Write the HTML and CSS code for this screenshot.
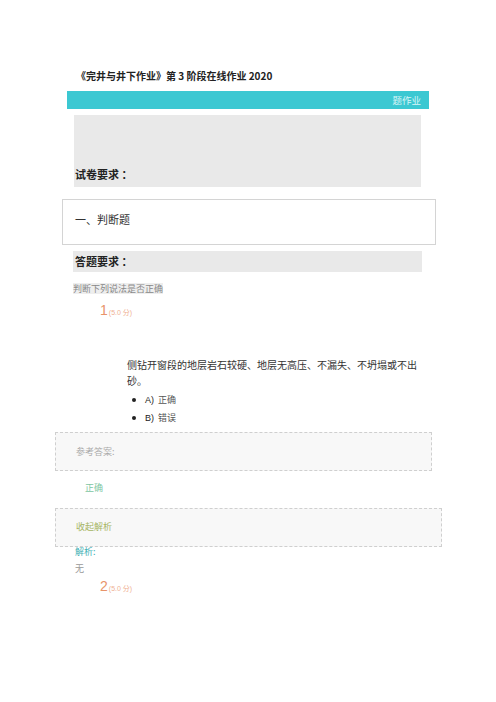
FILE: index.html
```html
<!DOCTYPE html>
<html lang="zh-CN">
<head>
    <meta charset="UTF-8">
    <meta name="viewport" content="width=device-width, initial-scale=1.0">
    <title>在线作业</title>
    <link rel="stylesheet" href="styles.css">
</head>
<body>

<div class="page">
    <h1 class="doc-title">《完井与井下作业》第 3 阶段在线作业 2020</h1>
    <div class="topbar">题作业</div>

    <div class="paper-req">
        <span class="req-label">试卷要求 ：</span>
    </div>

    <div class="section-box">一、判断题</div>

    <div class="answer-req">答题要求 ：</div>
    <div class="answer-note"><span>判断下列说法是否正确</span></div>

    <div class="q-num">1<small>(5.0 分)</small></div>
    <p class="q-text">侧钻开窗段的地层岩石较硬、地层无高压、不漏失、不坍塌或不出砂。</p>
    <ul class="options">
        <li><span class="opt-key">A)</span> 正确</li>
        <li><span class="opt-key">B)</span> 错误</li>
    </ul>

    <div class="dash-box ref">参考答案:</div>
    <div class="ref-answer">正确</div>

    <div class="dash-box fold">收起解析</div>
    <div class="explain-label">解析:</div>
    <div class="explain-text">无</div>

    <div class="q-num second">2<small>(5.0 分)</small></div>
</div>

</body>
</html>
```

FILE: styles.css
```css
body {
    margin: 0;
    background-color: #fff;
    font-family: "Noto Sans CJK SC", "Liberation Sans", sans-serif;
    color: #333;
}
.page {
    width: 496px;
    padding-top: 69px;
}
.doc-title {
    margin: 0 0 0 76px;
    font-size: 10px;
    line-height: 14px;
    font-weight: bold;
    color: #222;
}
.topbar {
    margin: 8px 0 0 67px;
    width: 354px;
    height: 18px;
    line-height: 18px;
    padding-right: 8px;
    background-color: #3cc8d2;
    color: #d9f5f7;
    font-size: 9.5px;
    text-align: right;
}
.paper-req {
    margin: 6px 0 0 74px;
    width: 347px;
    height: 72px;
    padding-left: 1px;
    box-sizing: border-box;
    background-color: #e9e9e9;
    display: flex;
    flex-direction: column;
    justify-content: flex-end;
    padding-bottom: 6px;
}
.req-label, .answer-req {
    font-size: 11px;
    font-weight: bold;
    color: #222;
    line-height: 14px;
}
.section-box {
    margin: 12px 0 0 62px;
    width: 374px;
    height: 46px;
    box-sizing: border-box;
    border: 1px solid #d4d4d4;
    padding: 11px 0 0 12px;
    font-size: 11px;
    line-height: 16px;
    color: #333;
}
.answer-req {
    margin: 6px 0 0 73px;
    width: 347px;
    height: 21px;
    line-height: 21px;
    padding-left: 2px;
    background-color: #e9e9e9;
}
.answer-note {
    margin: 1px 0 0 73px;
    height: 11px;
}
.answer-note span {
    display: inline-block;
    background-color: #eeeeee;
    color: #888;
    font-size: 9px;
    line-height: 11px;
}
.q-num {
    margin: 18px 0 0 100px;
    height: 16px;
    line-height: 16px;
    font-family: "Liberation Sans", sans-serif;
    font-size: 14px;
    color: #e8946a;
}
.q-num small {
    font-family: "Liberation Sans", "Noto Sans CJK SC", sans-serif;
    font-size: 7px;
    color: #efb193;
    margin-left: 1px;
}
.q-text {
    margin: 39px 0 0 127px;
    width: 292px;
    font-size: 10px;
    line-height: 16px;
    color: #333;
}
.options {
    list-style: none;
    margin: 2px 0 0 0;
    padding: 0 0 0 132px;
}
.options li {
    position: relative;
    height: 18px;
    line-height: 18px;
    padding-left: 13px;
    font-size: 9px;
    color: #555;
}
.options li::before {
    content: "";
    position: absolute;
    left: 0;
    top: 7px;
    width: 4px;
    height: 4px;
    border-radius: 50%;
    background-color: #222;
}
.opt-key {
    font-family: "Liberation Sans", sans-serif;
    color: #222;
    margin-right: 2px;
}
.dash-box {
    margin-left: 55px;
    height: 39px;
    box-sizing: border-box;
    border: 1px dashed #cfcfcf;
    background-color: #f8f8f8;
    padding-left: 20px;
    font-size: 9px;
    line-height: 37px;
}
.dash-box.ref {
    margin-top: 5px;
    width: 377px;
    color: #aaa;
}
.dash-box.fold {
    margin-top: 13px;
    width: 387px;
    color: #a6b564;
    line-height: 35px;
}
.ref-answer {
    margin: 10px 0 0 85px;
    font-size: 9px;
    line-height: 14px;
    color: #80c6a2;
}
.explain-label {
    margin-left: 75px;
    font-size: 9px;
    line-height: 10px;
    color: #3eafb4;
}
.explain-text {
    margin: 6px 0 0 75px;
    font-size: 9px;
    line-height: 12px;
    color: #999;
}
.q-num.second {
    margin-top: 3px;
}
```
